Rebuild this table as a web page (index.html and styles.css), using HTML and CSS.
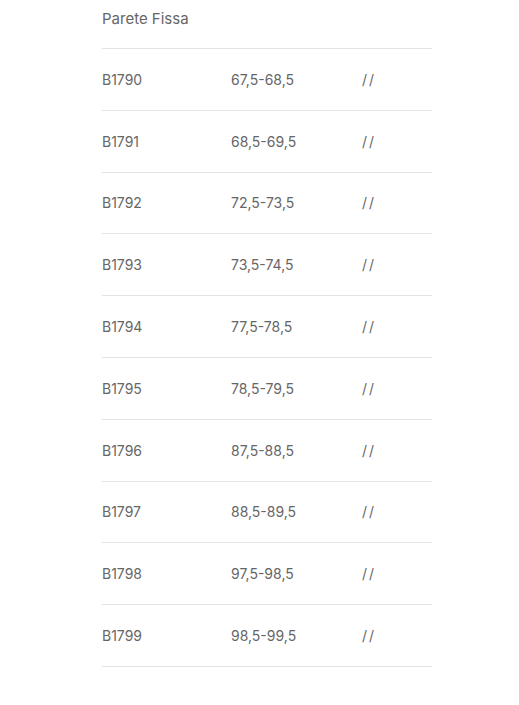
FILE: index.html
```html
<!DOCTYPE html>
<html lang="it">
<head>
<meta charset="utf-8">
<link rel="stylesheet" href="styles.css">
</head>
<body>
<div class="table">
  <div class="head">Parete Fissa</div>
  <div class="row"><span class="c1">B1790</span><span class="c2">67,5-68,5</span><span class="c3">//</span></div>
  <div class="row"><span class="c1">B1791</span><span class="c2">68,5-69,5</span><span class="c3">//</span></div>
  <div class="row"><span class="c1">B1792</span><span class="c2">72,5-73,5</span><span class="c3">//</span></div>
  <div class="row"><span class="c1">B1793</span><span class="c2">73,5-74,5</span><span class="c3">//</span></div>
  <div class="row"><span class="c1">B1794</span><span class="c2">77,5-78,5</span><span class="c3">//</span></div>
  <div class="row"><span class="c1">B1795</span><span class="c2">78,5-79,5</span><span class="c3">//</span></div>
  <div class="row"><span class="c1">B1796</span><span class="c2">87,5-88,5</span><span class="c3">//</span></div>
  <div class="row"><span class="c1">B1797</span><span class="c2">88,5-89,5</span><span class="c3">//</span></div>
  <div class="row"><span class="c1">B1798</span><span class="c2">97,5-98,5</span><span class="c3">//</span></div>
  <div class="row"><span class="c1">B1799</span><span class="c2">98,5-99,5</span><span class="c3">//</span></div>
</div>
</body>
</html>
```
FILE: styles.css
```css
html, body {
  margin: 0;
  padding: 0;
  background: #fff;
}
body {
  font-family: Inter, Roboto, "Liberation Sans", sans-serif;
  font-size: 14px;
  font-weight: 400;
  color: #666;
}
.table {
  width: 330px;
  margin-left: 102px;
}
.head {
  height: 49px;
  box-sizing: border-box;
  font-size: 15px;
  line-height: 38px;
  border-bottom: 1px solid #e3e3e3;
}
.row {
  display: flex;
  align-items: center;
  height: 60.8px;
  border-bottom: 1px solid #e3e3e3;
}
.c1 { width: 129px; }
.c2 { width: 131px; }
.c3 { flex: 1; letter-spacing: 2px; }
```
